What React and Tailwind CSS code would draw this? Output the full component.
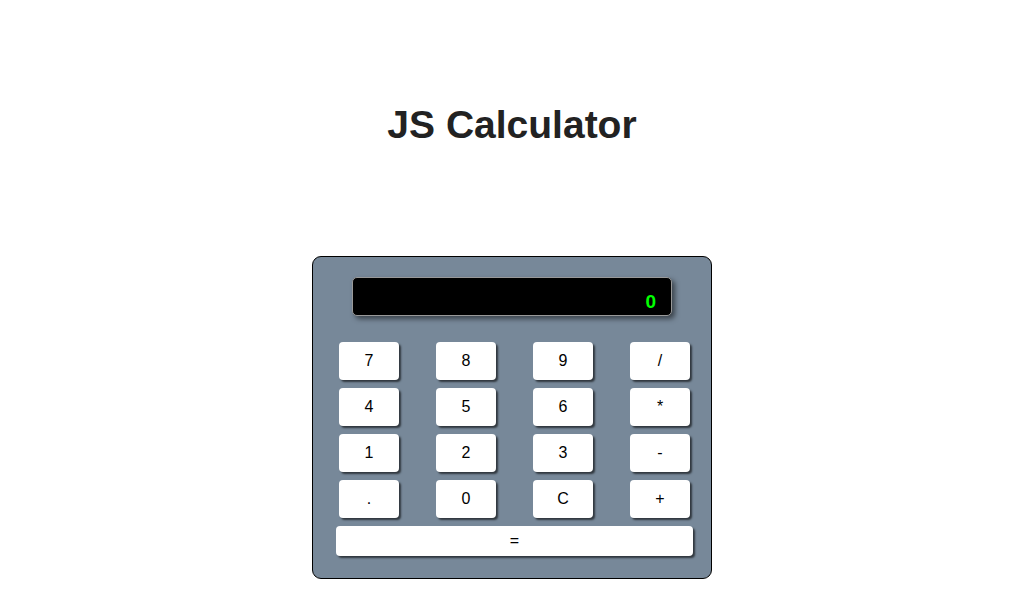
import React, { useState } from 'react';

const keys = ['7', '8', '9', '/', '4', '5', '6', '*', '1', '2', '3', '-', '.', '0', 'C', '+'];

export default function App() {
  const [value] = useState('0');

  return (
    <div className="min-h-screen bg-white font-['Liberation_Sans',Arial,sans-serif]">
      <h1 className="pt-[101px] text-center text-[39px] font-bold leading-[48px] text-[#222]">JS Calculator</h1>
      <div className="flex justify-center pt-[107px]">
        <div className="w-[400px] h-[323px] rounded-[9px] border border-black bg-[#778899] pt-[20px]">
          <div className="mx-auto flex h-[39px] w-[320px] items-end justify-end rounded-[5px] border border-[#999] bg-black pr-[15px] pb-[2px] shadow-[3px_3px_5px_rgba(0,0,0,0.5)]">
            <span className="text-[19px] font-bold leading-[22px] text-[#00ff00]">{value}</span>
          </div>
          <div className="mt-[26px] grid grid-cols-[repeat(4,60px)] gap-x-[37px] gap-y-[8px] pl-[26px]">
            {keys.map((k) => (
              <button
                key={k}
                className="h-[38px] w-[60px] rounded-[4px] bg-white text-[16px] text-black shadow-[2px_2px_2px_rgba(0,0,0,0.6)]"
              >
                {k}
              </button>
            ))}
          </div>
          <div className="mt-[8px] pl-[23px]">
            <button className="h-[30px] w-[357px] rounded-[4px] bg-white text-[16px] text-black shadow-[2px_2px_2px_rgba(0,0,0,0.6)]">
              =
            </button>
          </div>
        </div>
      </div>
    </div>
  );
}
